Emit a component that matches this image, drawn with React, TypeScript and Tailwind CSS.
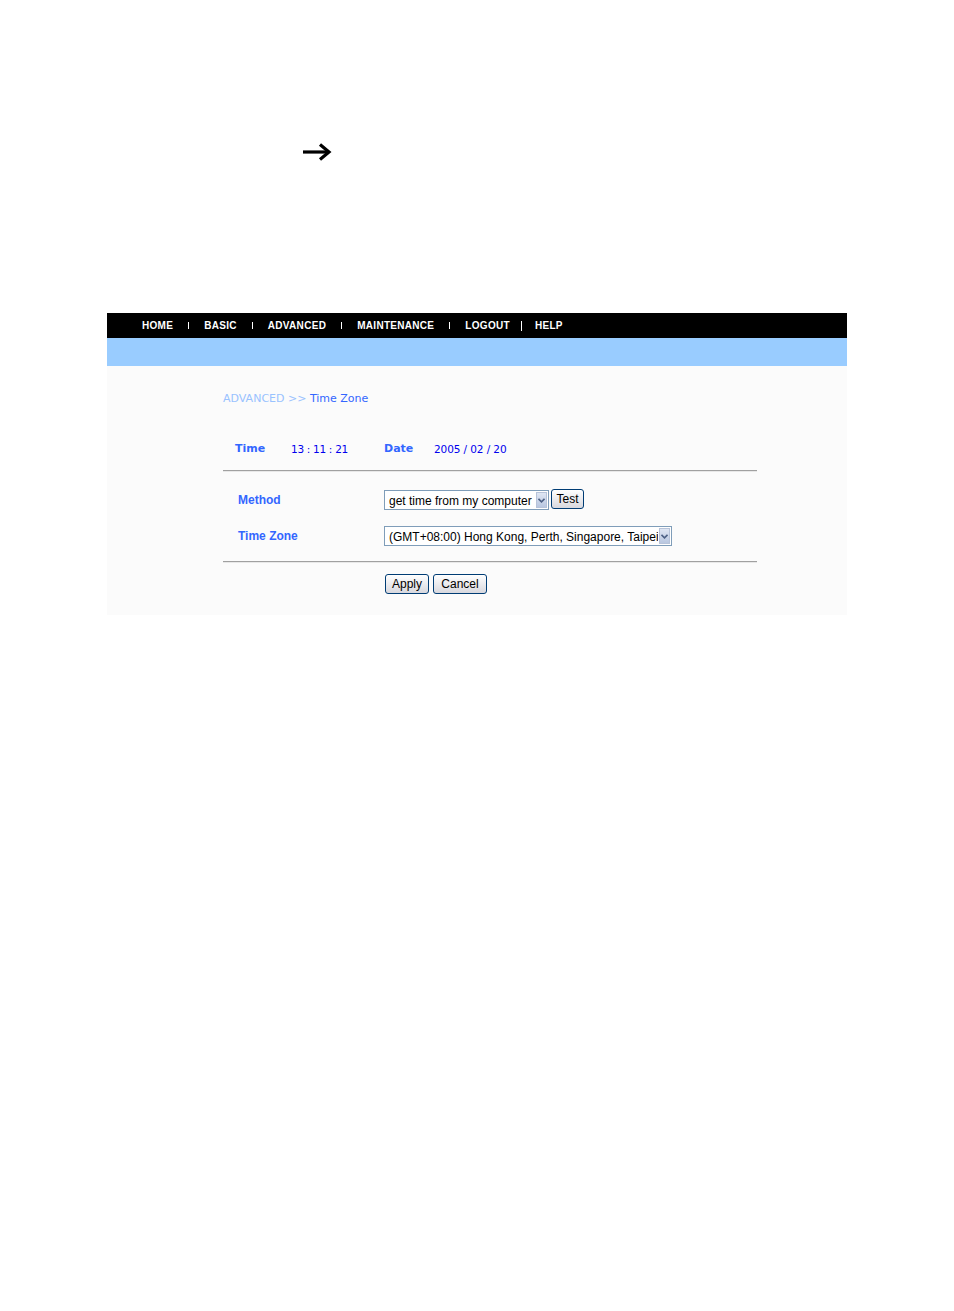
import React from 'react';

const nav = ['HOME', 'BASIC', 'ADVANCED', 'MAINTENANCE', 'LOGOUT', 'HELP'];
const arial = { fontFamily: '"Liberation Sans", Arial, sans-serif' };

function Select({ text, width }: { text: string; width: string }) {
  return (
    <div className={`flex h-[20px] items-stretch border border-[#7f9db9] bg-white ${width}`} style={arial}>
      <span className="flex-1 overflow-hidden whitespace-nowrap pl-[4px] pt-[3px] text-[12px] leading-[14px] text-black">{text}</span>
      <span className="m-[1px] flex w-[11px] items-center justify-center border border-[#b7c3d9] bg-gradient-to-b from-[#dfe6f3] to-[#b9c7e0]">
        <svg width="7" height="5" viewBox="0 0 7 5"><path d="M0.5 0.8 L3.5 3.8 L6.5 0.8" stroke="#4d6185" strokeWidth="1.6" fill="none" /></svg>
      </span>
    </div>
  );
}

function Btn({ label, className = '' }: { label: string; className?: string }) {
  return (
    <button className={`h-[20px] rounded-[3px] border border-[#003c74] bg-gradient-to-b from-white to-[#d8d8de] text-[12px] leading-[16px] text-black ${className}`} style={arial}>
      {label}
    </button>
  );
}

export default function App() {
  return (
    <div className="min-h-[1311px] bg-white" style={{ fontFamily: '"DejaVu Sans", Verdana, sans-serif' }}>
      <div className="h-[142px]" />
      <div className="pl-[302px]">
        <svg width="30" height="20" viewBox="0 0 30 20">
          <path d="M1 10 H26" stroke="#000" strokeWidth="3.2" />
          <path d="M18 2.5 L27 10 L18 17.5" stroke="#000" strokeWidth="3.2" fill="none" strokeLinejoin="miter" />
        </svg>
      </div>
      <div className="h-[151px]" />
      <div className="mx-[107px]">
        <div className="flex h-[25px] items-center bg-black pl-[35px] text-[10px] font-bold tracking-[0.3px] text-white" style={arial}>
          {nav.map((n, i) => (
            <React.Fragment key={n}>
              {i > 0 && i < nav.length - 1 && <span className="mx-[15px] h-[7px] w-[1px] bg-white" />}
              {i === nav.length - 1 && <span className="ml-[11px] mr-[13px] h-[10px] w-[1px] bg-white" />}
              <span>{n}</span>
            </React.Fragment>
          ))}
        </div>
        <div className="h-[28px] bg-[#99ccff]" />
        <div className="h-[249px] bg-[#fbfbfb] pl-[116px]">
          <div className="w-[534px]">
            <div className="pt-[26px] text-[11px] leading-[14px]">
              <span className="text-[#99c2ff]">ADVANCED &gt;&gt; </span>
              <span className="text-[#3366ff]">Time Zone</span>
            </div>
            <div className="mt-[36px] flex h-[14px] items-center text-[11px] leading-[14px]">
              <span className="ml-[12px] w-[56px] font-bold text-[#3366ff]">Time</span>
              <span className="w-[93px] text-[10.5px] tracking-[-0.3px] text-[#0000ee]">13 : 11 : 21</span>
              <span className="w-[50px] font-bold text-[#3366ff]">Date</span>
              <span className="text-[10.5px] tracking-[-0.1px] text-[#0000ee]">2005 / 02 / 20</span>
            </div>
            <div className="mt-[14px] h-[2px] border-t border-[#a0a0a0] bg-[#e8e8e8]" />
            <div className="mt-[18px] flex items-center">
              <span className="ml-[15px] w-[146px] text-[12px] font-bold text-[#3366ff]" style={arial}>Method</span>
              <Select text="get time from my computer" width="w-[165px]" />
              <Btn label="Test" className="ml-[2px] w-[33px] -mt-[2px]" />
            </div>
            <div className="mt-[16px] flex items-center">
              <span className="ml-[15px] w-[146px] text-[12px] font-bold text-[#3366ff]" style={arial}>Time Zone</span>
              <Select text="(GMT+08:00) Hong Kong, Perth, Singapore, Taipei" width="w-[288px]" />
            </div>
            <div className="mt-[15px] h-[2px] border-t border-[#a0a0a0] bg-[#e8e8e8]" />
            <div className="mt-[11px] flex pl-[162px]">
              <Btn label="Apply" className="w-[44px]" />
              <Btn label="Cancel" className="ml-[4px] w-[54px]" />
            </div>
          </div>
        </div>
      </div>
    </div>
  );
}
